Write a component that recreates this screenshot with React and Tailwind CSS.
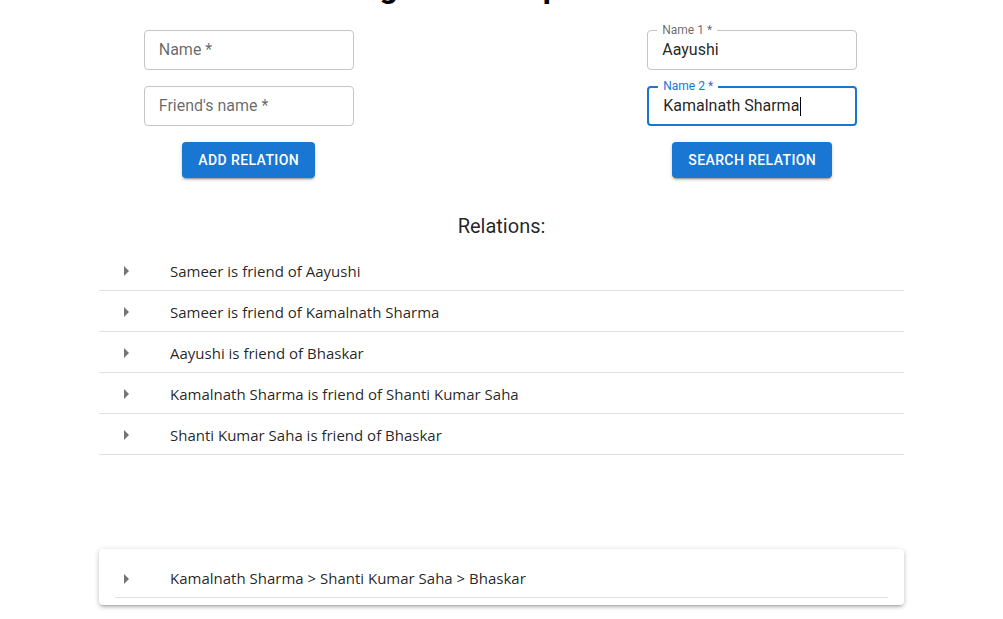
const relations = [
  "Sameer is friend of Aayushi",
  "Sameer is friend of Kamalnath Sharma",
  "Aayushi is friend of Bhaskar",
  "Kamalnath Sharma is friend of Shanti Kumar Saha",
  "Shanti Kumar Saha is friend of Bhaskar",
];

function Arrow() {
  return (
    <svg width="10" height="12" viewBox="0 0 10 12" className="shrink-0">
      <path d="M2 1 L7 6 L2 11 Z" fill="#757575" />
    </svg>
  );
}

function Field({ label, value, placeholder, focused }) {
  return (
    <div
      className={
        "relative w-[210px] h-10 rounded-[4px] flex items-center px-[14px] " +
        (focused
          ? "border-2 border-[#1976d2] px-[13px]"
          : "border border-[#c4c4c4]")
      }
    >
      {label && (
        <span
          className={
            "absolute left-[9px] top-[-8px] bg-white px-[5px] text-[12px] leading-[14px] " +
            (focused ? "text-[#1976d2] left-[8px] top-[-9px]" : "text-[rgba(0,0,0,0.6)]")
          }
        >
          {label}
        </span>
      )}
      {value ? (
        <span className="text-[16px] text-[rgba(0,0,0,0.87)] flex items-center">
          {value}
          {focused && <span className="inline-block w-px h-[19px] bg-black ml-px" />}
        </span>
      ) : (
        <span className="text-[16px] text-[rgba(0,0,0,0.6)]">{placeholder}</span>
      )}
    </div>
  );
}

function Button({ children }) {
  return (
    <button className="h-9 px-4 rounded-[4px] bg-[#1976d2] text-white text-[14px] font-medium uppercase tracking-[0.4px] shadow-[0_3px_1px_-2px_rgba(0,0,0,0.2),0_2px_2px_0_rgba(0,0,0,0.14),0_1px_5px_0_rgba(0,0,0,0.12)]">
      {children}
    </button>
  );
}

export default function App() {
  return (
    <div className="min-h-screen bg-white font-['Roboto',sans-serif] overflow-hidden">
      <h1 className="text-center text-[32px] font-bold leading-[38px] mt-[-32px] text-black">
        Degrees of Separation
      </h1>

      <div className="grid grid-cols-2 mt-[24px]">
        <div className="flex flex-col items-center pr-[4px]">
          <Field placeholder="Name *" />
          <div className="h-4" />
          <Field placeholder="Friend's name *" />
          <div className="mt-4">
            <Button>Add Relation</Button>
          </div>
        </div>
        <div className="flex flex-col items-center">
          <Field label="Name 1 *" value="Aayushi" />
          <div className="h-4" />
          <Field label="Name 2 *" value="Kamalnath Sharma" focused />
          <div className="mt-4">
            <Button>Search Relation</Button>
          </div>
        </div>
      </div>

      <h2 className="text-center text-[20px] leading-[24px] text-[rgba(0,0,0,0.87)] mt-[36px]">
        Relations:
      </h2>

      <div className="w-[805px] mx-auto mt-[12px] font-['Open_Sans',sans-serif]">
        {relations.map((r) => (
          <div
            key={r}
            className="h-[41px] flex items-center pt-[2px] border-b border-[#e0e0e0] text-[15px] text-[rgba(0,0,0,0.87)]"
          >
            <div className="w-[72px] pl-[23px] flex items-center">
              <Arrow />
            </div>
            <span className="-ml-px">{r}</span>
          </div>
        ))}
      </div>

      <div className="w-[805px] mx-auto mt-[94px] rounded-[4px] bg-white px-4 pt-[11px] pb-[7px] shadow-[0_3px_3px_-2px_rgba(0,0,0,0.2),0_2px_4px_0_rgba(0,0,0,0.14),0_1px_6px_0_rgba(0,0,0,0.12)] font-['Open_Sans',sans-serif]">
        <div className="h-[38px] flex items-center border-b border-[#e0e0e0] text-[15px] text-[rgba(0,0,0,0.87)]">
          <div className="w-[56px] pl-[7px] flex items-center">
            <Arrow />
          </div>
          <span className="-ml-px">Kamalnath Sharma &gt; Shanti Kumar Saha &gt; Bhaskar</span>
        </div>
      </div>
    </div>
  );
}
